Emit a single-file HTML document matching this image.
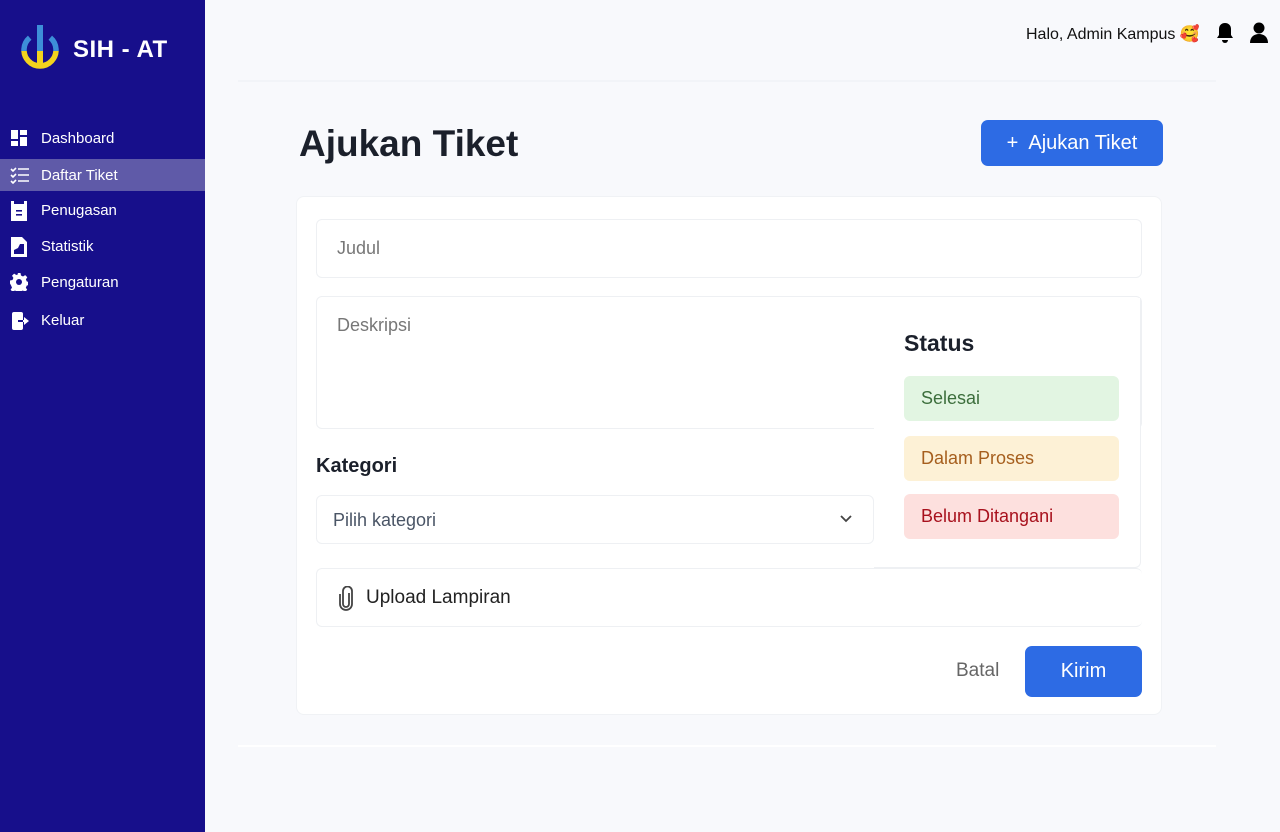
<!DOCTYPE html>
<html><head><meta charset="utf-8"><style>
*{box-sizing:border-box;margin:0;padding:0}
body{width:1280px;height:832px;background:#f8f9fc;font-family:"Liberation Sans",sans-serif;position:relative;overflow:hidden}
.sb{position:absolute;left:0;top:0;width:205px;height:832px;background:#170f8b;color:#fff}
.logo{position:absolute;left:73px;top:36px;font-size:24px;font-weight:bold;letter-spacing:0.5px}
.nav{position:absolute;left:0;width:205px;height:32px;font-size:15px;line-height:34px;padding-left:41px}
.nav svg{position:absolute;left:10px;top:7px}
.act{background:#5f5aa8}
.abs{position:absolute}
.box{position:absolute;background:#fff;border:1.5px solid #eef0f3;border-radius:6px}
.ph{color:#777;font-size:18px}
.st{position:absolute;left:904px;width:215px;height:45px;border-radius:6px;font-size:18px;line-height:45px;padding-left:17px}
</style></head><body>
<div class="sb">
<svg class="abs" style="left:20px;top:24px" width="42" height="46" viewBox="0 0 42 46">
<defs><clipPath id="lo"><rect x="0" y="27" width="42" height="20"/></clipPath><clipPath id="hi"><rect x="0" y="0" width="42" height="27"/></clipPath></defs>
<path d="M9.7 13.7 A16 16 0 1 0 30.3 13.7" fill="none" stroke="#3d8fd8" stroke-width="5.5" clip-path="url(#hi)"/>
<path d="M9.7 13.7 A16 16 0 1 0 30.3 13.7" fill="none" stroke="#f3d31d" stroke-width="5.5" clip-path="url(#lo)"/>
<rect x="17" y="1" width="6" height="26" fill="#3d8fd8"/>
<rect x="17" y="27" width="6" height="15" fill="#f3d31d"/>
</svg>
<div class="logo">SIH - AT</div>
<div class="nav" style="top:122px"><svg width="18" height="18" viewBox="0 0 18 18" fill="#fff"><rect x="1" y="1" width="7" height="9"/><rect x="10" y="1" width="7" height="5"/><rect x="1" y="12" width="7" height="5"/><rect x="10" y="8" width="7" height="9"/></svg>Dashboard</div>
<div class="nav act" style="top:159px"><svg width="20" height="18" viewBox="0 0 20 18" fill="none" stroke="#fff" stroke-width="1.6"><path d="M1 3l2 2 3-3M1 9l2 2 3-3M1 15l2 2 3-3M8 3h11M8 9h11M8 15h11"/></svg>Daftar Tiket</div>
<div class="nav" style="top:194px"><svg width="18" height="20" viewBox="0 0 18 20"><path d="M1 0h3v3h10V0h3v20H1z" fill="#fff"/><rect x="6" y="9" width="6" height="1.6" fill="#170f8b"/><rect x="6" y="13" width="6" height="1.6" fill="#170f8b"/></svg>Penugasan</div>
<div class="nav" style="top:230px"><svg width="18" height="20" viewBox="0 0 18 20"><path d="M1 0h11l5 5v15H1z" fill="#fff"/><path d="M4 17v-4l4-2 2-4h4v10z" fill="#170f8b"/></svg>Statistik</div>
<div class="nav" style="top:266px"><svg width="18" height="18" viewBox="0 0 18 18"><path d="M7.5 0h3l.5 2.5 2 1 2.2-1.4 2.1 2.1L15.9 6.4l.9 2.1 2.2.5v3l-2.2.5-.9 2-.1.1 1.4 2.2-2.1 2.1-2.2-1.4-2 .9-.5 2.5h-3l-.5-2.5-2-.9-2.2 1.4-2.1-2.1 1.4-2.2-.9-2.1L0 10.5v-3l2.5-.5.9-2.1L2 2.7 4.1.6l2.2 1.4 2-.9z" fill="#fff"/><circle cx="9" cy="9" r="3" fill="#170f8b"/></svg>Pengaturan</div>
<div class="nav" style="top:304px"><svg width="22" height="20" viewBox="0 0 22 20"><rect x="2" y="1" width="11" height="18" rx="2" fill="#fff"/><path d="M8 10h8" stroke="#170f8b" stroke-width="2"/><path d="M14 6l5 4-5 4z" fill="#fff"/><path d="M13 10h4" stroke="#fff" stroke-width="2"/></svg>Keluar</div>
</div>

<div class="abs" style="left:1026px;top:24px;font-size:16px;color:#111">Halo, Admin Kampus 🥰</div>
<svg class="abs" style="left:1215px;top:22px" width="20" height="22" viewBox="0 0 20 22"><path d="M10 1c-4 0-6 3-6 6v6l-2 3h16l-2-3V7c0-3-2-6-6-6z" fill="#000"/><path d="M7 18a3 3 0 0 0 6 0z" fill="#000"/></svg>
<svg class="abs" style="left:1249px;top:22px" width="20" height="22" viewBox="0 0 20 22"><circle cx="10" cy="6" r="5.5" fill="#000"/><path d="M1 21c0-6 4-9 9-9s9 3 9 9z" fill="#000"/></svg>

<div class="abs" style="left:238px;top:80px;width:978px;height:2px;background:#f2f4f8"></div>
<div class="abs" style="left:238px;top:745px;width:978px;height:2px;background:#fff"></div>

<div class="abs" style="left:299px;top:123px;font-size:37px;font-weight:bold;color:#1b202b">Ajukan Tiket</div>
<div class="abs" style="left:981px;top:120px;width:182px;height:46px;background:#2d6be4;border-radius:7px;color:#fff;font-size:20px;line-height:46px;text-align:center">+&nbsp; Ajukan Tiket</div>

<div class="abs" style="left:296px;top:196px;width:866px;height:519px;background:#fff;border-radius:8px;border:1px solid #f0f2f5"></div>
<div class="box" style="left:316px;top:219px;width:826px;height:59px"><span class="ph abs" style="left:20px;top:18px">Judul</span></div>
<div class="box" style="left:316px;top:296px;width:826px;height:133px"><span class="ph abs" style="left:20px;top:18px">Deskripsi</span></div>
<div class="abs" style="left:874px;top:298px;width:267px;height:270px;background:#fff;border-right:1.5px solid #eef0f3;border-bottom:1.5px solid #eef0f3;border-bottom-right-radius:6px"></div>
<div class="abs" style="left:904px;top:330px;font-size:23px;font-weight:bold;color:#1b202b">Status</div>
<div class="st" style="top:376px;background:#e2f5e2;color:#3c6e3c">Selesai</div>
<div class="st" style="top:436px;background:#fdf1d6;color:#a65f1e">Dalam Proses</div>
<div class="st" style="top:494px;background:#fde0de;color:#a8111d">Belum Ditangani</div>

<div class="abs" style="left:316px;top:455px;font-size:20px;font-weight:bold;color:#1b202b">Kategori</div>
<div class="box" style="left:316px;top:495px;width:558px;height:49px"><span class="abs" style="left:16px;top:14px;font-size:18px;color:#4a5566">Pilih kategori</span>
<svg class="abs" style="left:522px;top:18px" width="14" height="10" viewBox="0 0 14 10"><path d="M2 2l5 5 5-5" fill="none" stroke="#444" stroke-width="1.8"/></svg></div>

<div class="box" style="left:316px;top:568px;width:826px;height:59px;border-right:none"><svg class="abs" style="left:20px;top:17px" width="18" height="26" viewBox="0 0 18 26"><path d="M12 7v11a3 3 0 0 1-6 0V5a4.5 4.5 0 0 1 9 0v13a6 6 0 0 1-12 0V8" fill="none" stroke="#444" stroke-width="1.8"/></svg>
<span class="abs" style="left:49px;top:18px;font-size:19px;color:#222">Upload Lampiran</span></div>

<div class="abs" style="left:956px;top:660px;font-size:19px;color:#666">Batal</div>
<div class="abs" style="left:1025px;top:646px;width:117px;height:51px;background:#2d6be4;border-radius:7px;color:#fff;font-size:20px;line-height:51px;text-align:center">Kirim</div>
</body></html>
